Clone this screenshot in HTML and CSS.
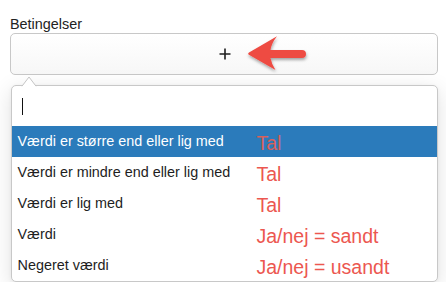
FILE: index.html
```html
<!DOCTYPE html>
<html lang="da">
<head>
<meta charset="utf-8">
<title>Betingelser</title>
<link rel="stylesheet" href="styles.css">
</head>
<body>
<div class="field">
  <div class="label">Betingelser</div>
  <div class="add-btn">
    <svg class="plus" width="12" height="12" viewBox="0 0 12 12"><path d="M6 0.5V11.5M0.5 6H11.5" stroke="#1f1f1f" stroke-width="1.6" fill="none"/></svg>
    <svg class="arrow" width="68" height="44" viewBox="0 0 68 44">
      <defs>
        <filter id="sh" x="-20%" y="-20%" width="140%" height="150%">
          <feDropShadow dx="0.5" dy="2" stdDeviation="1.4" flood-color="#000" flood-opacity="0.35"/>
        </filter>
      </defs>
      <path filter="url(#sh)" fill="#ee4b43" d="M4.5 22.5 Q3.5 21.5 5 20.5 L33 4.2 Q27.5 11 26.5 18 L58 18 Q62 18 62 22 Q62 26 58 26 L26.5 26 Q27.5 32 31.5 38 Z"/>
    </svg>
  </div>
  <div class="dropdown">
    <svg class="caret" width="16" height="11" viewBox="0 0 16 11"><path d="M0 11 L1 10 L8 1 L15 10 L16 11 Z" fill="#fff"/><path d="M1 10.2 L8 1 L15 10.2" stroke="#c4c4c4" stroke-width="1" fill="none"/></svg>
    <div class="search"><span class="cursor"></span></div>
    <ul class="options">
      <li class="option active"><span class="text">Værdi er større end eller lig med</span><span class="note">Tal</span></li>
      <li class="option"><span class="text">Værdi er mindre end eller lig med</span><span class="note">Tal</span></li>
      <li class="option"><span class="text">Værdi er lig med</span><span class="note">Tal</span></li>
      <li class="option"><span class="text">Værdi</span><span class="note">Ja/nej = sandt</span></li>
      <li class="option"><span class="text">Negeret værdi</span><span class="note">Ja/nej = usandt</span></li>
    </ul>
  </div>
</div>
</body>
</html>
```

FILE: styles.css
```css
html, body {
  margin: 0;
  padding: 0;
  background: #ffffff;
}

body {
  font-family: "Liberation Sans", Arial, sans-serif;
  color: #1e1e1e;
}

.field {
  padding: 16px 0 0 10px;
  width: 428px;
}

.label {
  font-size: 14.4px;
  line-height: 16px;
  color: #222;
  margin-bottom: 1px;
}

.add-btn {
  position: relative;
  box-sizing: border-box;
  width: 428px;
  height: 42px;
  border: 1px solid #c8c8c8;
  border-radius: 5px;
  background: linear-gradient(#ffffff, #f7f7f7);
  display: flex;
  align-items: center;
  justify-content: center;
}

.plus {
  display: block;
  margin-left: 2px;
}

.arrow {
  position: absolute;
  left: 233px;
  top: -2px;
  overflow: visible;
}

.dropdown {
  position: relative;
  box-sizing: border-box;
  margin: 10px 0 0 1px;
  width: 427px;
  border: 1px solid #c8c8c8;
  border-radius: 5px;
  background: #fff;
  box-shadow: 0 5px 22px rgba(0, 0, 0, 0.12), 0 1px 4px rgba(0, 0, 0, 0.05);
}

.caret {
  position: absolute;
  left: 9px;
  top: -10px;
  display: block;
}

.search {
  height: 40px;
  padding-left: 10px;
  display: flex;
  align-items: flex-start;
}

.cursor {
  display: block;
  width: 1px;
  height: 17px;
  margin-top: 12px;
  background: #111;
}

.options {
  list-style: none;
  margin: 0;
  padding: 0;
}

.option {
  height: 31px;
  display: grid;
  grid-template-columns: 239px 1fr;
  align-items: start;
  padding-left: 5.5px;
  font-size: 14.4px;
  line-height: 31px;
  white-space: nowrap;
}

.option:last-child {
  border-radius: 0 0 4px 4px;
}

.option.active {
  background: #2b7bbb;
  color: #ffffff;
}

.note {
  font-size: 19.5px;
  line-height: 31px;
  margin-top: 2px;
  color: #ec5750;
}

.option.active .note {
  color: #d8615c;
}
```
